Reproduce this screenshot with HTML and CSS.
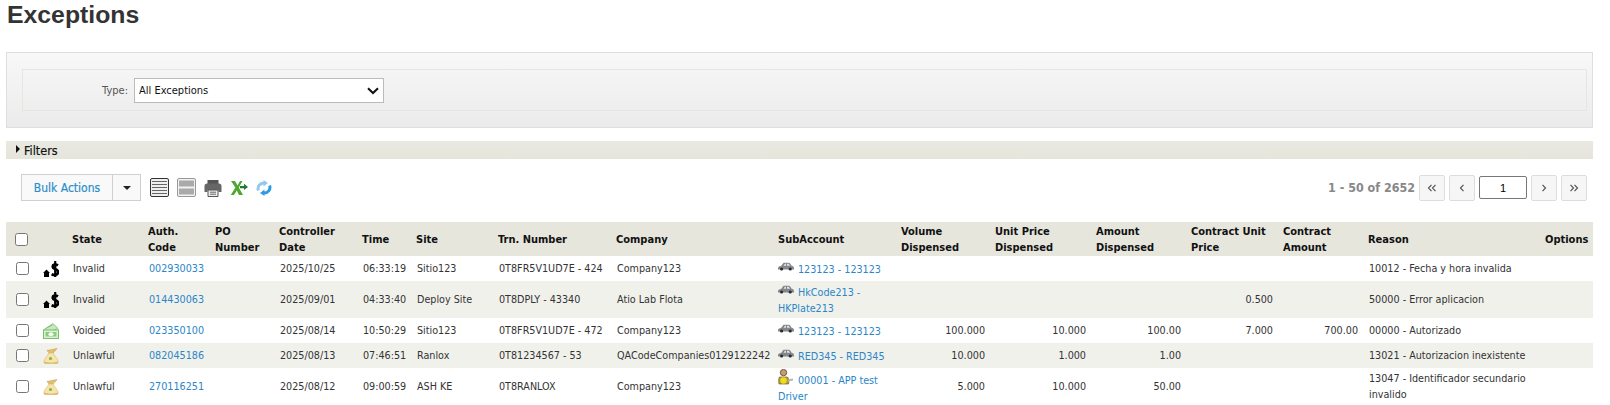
FILE: index.html
```html
<!DOCTYPE html>
<html>
<head>
  <title>Exceptions</title>
  <link rel="stylesheet" href="styles.css">
</head>
<body>
  <svg class="icon-defs" width="0" height="0">
    <symbol id="i-invalid" viewBox="0 0 16 16">
      <path d="M0 12L3.5 8.5L7 12H6V16H1V12Z" fill="#000"/>
      <path d="M15 4.4C12.6 3 9.6 3.4 9.8 5.8C10 8.4 15 7.8 15 11C15 14 11.6 14.6 8.6 13.2" fill="none" stroke="#000" stroke-width="2.8"/>
      <path d="M12.2 0V16" stroke="#000" stroke-width="2.2"/>
    </symbol>
    <symbol id="i-voided" viewBox="0 0 16 16">
      <path d="M0.5 7L10 0.5L15 5.5L6 9Z" fill="#c6e8bb" stroke="#79bd6e" stroke-width="0.8"/>
      <path d="M2.5 5.5L9.5 2" stroke="#79bd6e" stroke-width="0.8"/>
      <rect x="0.5" y="7" width="15" height="8.5" fill="#d9f1d0" stroke="#79bd6e"/>
      <rect x="2.5" y="9" width="11" height="4.5" fill="#8ccb80"/>
      <ellipse cx="8" cy="11.2" rx="2.6" ry="1.9" fill="#f1fbee"/>
    </symbol>
    <symbol id="i-bag" viewBox="0 0 16 16">
      <path d="M4 2.5L14 0.5L11.5 3.5L9.5 5.5H6.5Z" fill="#e3bf6c" stroke="#bd9644" stroke-width="0.5"/>
      <path d="M6 5C5 7.5 2 9.5 1 13C0.5 15 1.5 15.5 3.5 15.5H12.5C14.5 15.5 15.5 15 15 13C14 9.5 11 7.5 10 5Z" fill="#f5e5ac" stroke="#d8b66c" stroke-width="0.6"/>
      <circle cx="7.5" cy="10.5" r="1.6" fill="#8fb04a"/>
      <path d="M1.2 13.6C5 15 11 15 14.8 13.6V15.5H1.2Z" fill="#dcb866"/>
    </symbol>
    <symbol id="i-car" viewBox="0 0 16 9">
      <path d="M0 6.2C0 4.8 1 4.4 3 4L5 1.4C5.4 0.8 6 0.8 6.6 0.8H10.6C11.4 0.8 11.8 1 12.2 1.6L13.6 3.8C15 4.1 16 4.6 16 6.2V7.4H0Z" fill="#83878c"/>
      <path d="M5.6 3.8L6.8 1.8H8V3.8ZM9 1.8H10.8L12 3.8H9Z" fill="#dfe3e6"/>
      <circle cx="3.6" cy="7" r="1.6" fill="#2a2a2a"/>
      <circle cx="12.2" cy="7" r="1.6" fill="#2a2a2a"/>
    </symbol>
    <symbol id="i-driver" viewBox="0 0 16 16">
      <circle cx="5.5" cy="3.6" r="3.2" fill="#c69a72" stroke="#5f4128" stroke-width="0.8"/>
      <path d="M1.5 8H9.5C11 9.5 11 12 10.5 15H1C0.5 12 0.5 9.5 1.5 8Z" fill="#b9993a" stroke="#5f4f1c" stroke-width="0.6"/>
      <circle cx="5.5" cy="11.5" r="3.2" fill="#e6e020"/>
      <path d="M10 10.5L15 9.5V11.5L10 12.5Z" fill="#b5b5b5"/>
    </symbol>
    <symbol id="i-first" viewBox="0 0 10 8"><path d="M4.5 0.8L1.5 4L4.5 7.2M8.5 0.8L5.5 4L8.5 7.2" fill="none" stroke="#555" stroke-width="1.2"/></symbol>
    <symbol id="i-prev" viewBox="0 0 10 8"><path d="M6.5 0.8L3.5 4L6.5 7.2" fill="none" stroke="#555" stroke-width="1.2"/></symbol>
    <symbol id="i-next" viewBox="0 0 10 8"><path d="M3.5 0.8L6.5 4L3.5 7.2" fill="none" stroke="#555" stroke-width="1.2"/></symbol>
    <symbol id="i-last" viewBox="0 0 10 8"><path d="M1.5 0.8L4.5 4L1.5 7.2M5.5 0.8L8.5 4L5.5 7.2" fill="none" stroke="#555" stroke-width="1.2"/></symbol>
  </svg>

  <h1 class="page-title">Exceptions</h1>

  <div class="search-panel">
    <div class="search-inner">
      <label class="type-label" for="type">Type:</label>
      <div class="select-wrap">
        <select class="type-select" id="type">
          <option>All Exceptions</option>
        </select>
        <svg class="select-arrow" width="12" height="8" viewBox="0 0 12 8"><path d="M1 1.2L6 6L11 1.2" fill="none" stroke="#111" stroke-width="2"/></svg>
      </div>
    </div>
  </div>

  <div class="filters-bar">
    <span class="filters-arrow"></span>
    <span>Filters</span>
  </div>

  <div class="toolbar">
    <div class="bulk-group">
      <button class="bulk-btn">Bulk Actions</button>
      <button class="bulk-caret"><span class="caret"></span></button>
    </div>
    <div class="tool-icons">
      <svg width="19" height="19" viewBox="0 0 19 19">
        <rect x="0.5" y="0.5" width="18" height="18" rx="1.5" fill="#efefef" stroke="#333"/>
        <path d="M2 3.5H17M2 6.5H17M2 9.5H17M2 12.5H17M2 15.5H17" stroke="#666" stroke-width="1.2"/>
      </svg>
      <svg width="19" height="19" viewBox="0 0 19 19">
        <rect x="0.5" y="0.5" width="18" height="18" rx="1.5" fill="#f2f2f2" stroke="#999"/>
        <rect x="2" y="2.5" width="15" height="6" fill="#aaa"/>
        <rect x="2" y="10.5" width="15" height="6" fill="#aaa"/>
      </svg>
      <svg width="18" height="18" viewBox="0 0 18 18">
        <path d="M3.5 1H14.5V5H3.5Z" fill="#555"/>
        <path d="M0.5 7C0.5 5.5 1.5 4.5 3 4.5H15C16.5 4.5 17.5 5.5 17.5 7V13H14.5V11H3.5V13H0.5Z" fill="#666"/>
        <path d="M4 11H14V17.5H4Z" fill="#eee" stroke="#555"/>
        <path d="M6 13.2H12M6 15.2H12" stroke="#666"/>
      </svg>
      <svg width="18" height="16" viewBox="0 0 18 16">
        <path d="M1 1H5L7.6 5.4L10 1H12.5L8.8 7.5L13 15H9L6.8 10.6L4 15H0.8L5.4 7.6Z" fill="#4ea72e"/>
        <path d="M10 6H14V3.8L18 7L14 10V8.2H10Z" fill="#1f7a30"/>
      </svg>
      <svg width="16" height="16" viewBox="0 0 16 16">
        <path d="M2.4 10.5C1 6.5 4 2.6 8.5 3" fill="none" stroke="#93c8ee" stroke-width="3"/>
        <path d="M7.5 0L12 3L7.5 6.4Z" fill="#93c8ee"/>
        <path d="M13.6 5.5C15 9.5 12 13.4 7.5 13" fill="none" stroke="#2e9be6" stroke-width="3"/>
        <path d="M8.5 16L4 13L8.5 9.6Z" fill="#2e9be6"/>
      </svg>
    </div>
    <div class="pager">
      <span class="pager-count">1 - 50 of 2652</span>
      <button class="pager-btn"><svg class="pager-icon"><use href="#i-first"/></svg></button>
      <button class="pager-btn"><svg class="pager-icon"><use href="#i-prev"/></svg></button>
      <input class="pager-input" type="text" value="1">
      <button class="pager-btn"><svg class="pager-icon"><use href="#i-next"/></svg></button>
      <button class="pager-btn"><svg class="pager-icon"><use href="#i-last"/></svg></button>
    </div>
  </div>

  <table class="grid">
    <colgroup>
      <col class="c-check"><col class="c-icon"><col class="c-state"><col class="c-auth"><col class="c-po">
      <col class="c-date"><col class="c-time"><col class="c-site"><col class="c-trn"><col class="c-company">
      <col class="c-sub"><col class="c-volume"><col class="c-unit"><col class="c-amount"><col class="c-cunit">
      <col class="c-camount"><col class="c-reason"><col class="c-options">
    </colgroup>
    <thead>
      <tr>
        <th class="check-cell"><input type="checkbox"></th>
        <th></th>
        <th>State</th>
        <th>Auth. Code</th>
        <th>PO Number</th>
        <th>Controller Date</th>
        <th>Time</th>
        <th>Site</th>
        <th>Trn. Number</th>
        <th>Company</th>
        <th>SubAccount</th>
        <th>Volume Dispensed</th>
        <th>Unit Price Dispensed</th>
        <th>Amount Dispensed</th>
        <th>Contract Unit Price</th>
        <th>Contract Amount</th>
        <th>Reason</th>
        <th>Options</th>
      </tr>
    </thead>
    <tbody>
      <tr>
        <td class="check-cell"><input type="checkbox"></td>
        <td class="icon-cell"><svg class="state-icon"><use href="#i-invalid"/></svg></td>
        <td>Invalid</td>
        <td><a href="#">002930033</a></td>
        <td></td>
        <td>2025/10/25</td>
        <td>06:33:19</td>
        <td>Sitio123</td>
        <td>0T8FR5V1UD7E - 424</td>
        <td>Company123</td>
        <td class="sub-cell"><svg class="sub-icon"><use href="#i-car"/></svg><a href="#">123123 - 123123</a></td>
        <td class="num"></td>
        <td class="num"></td>
        <td class="num"></td>
        <td class="num"></td>
        <td class="num"></td>
        <td>10012 - Fecha y hora invalida</td>
        <td></td>
      </tr>
      <tr class="tall">
        <td class="check-cell"><input type="checkbox"></td>
        <td class="icon-cell"><svg class="state-icon"><use href="#i-invalid"/></svg></td>
        <td>Invalid</td>
        <td><a href="#">014430063</a></td>
        <td></td>
        <td>2025/09/01</td>
        <td>04:33:40</td>
        <td>Deploy Site</td>
        <td>0T8DPLY - 43340</td>
        <td>Atio Lab Flota</td>
        <td class="sub-cell"><svg class="sub-icon"><use href="#i-car"/></svg><a href="#">HkCode213 - HKPlate213</a></td>
        <td class="num"></td>
        <td class="num"></td>
        <td class="num"></td>
        <td class="num">0.500</td>
        <td class="num"></td>
        <td>50000 - Error aplicacion</td>
        <td></td>
      </tr>
      <tr>
        <td class="check-cell"><input type="checkbox"></td>
        <td class="icon-cell"><svg class="state-icon"><use href="#i-voided"/></svg></td>
        <td>Voided</td>
        <td><a href="#">023350100</a></td>
        <td></td>
        <td>2025/08/14</td>
        <td>10:50:29</td>
        <td>Sitio123</td>
        <td>0T8FR5V1UD7E - 472</td>
        <td>Company123</td>
        <td class="sub-cell"><svg class="sub-icon"><use href="#i-car"/></svg><a href="#">123123 - 123123</a></td>
        <td class="num">100.000</td>
        <td class="num">10.000</td>
        <td class="num">100.00</td>
        <td class="num">7.000</td>
        <td class="num">700.00</td>
        <td>00000 - Autorizado</td>
        <td></td>
      </tr>
      <tr>
        <td class="check-cell"><input type="checkbox"></td>
        <td class="icon-cell"><svg class="state-icon"><use href="#i-bag"/></svg></td>
        <td>Unlawful</td>
        <td><a href="#">082045186</a></td>
        <td></td>
        <td>2025/08/13</td>
        <td>07:46:51</td>
        <td>Ranlox</td>
        <td>0T81234567 - 53</td>
        <td>QACodeCompanies0129122242</td>
        <td class="sub-cell"><svg class="sub-icon"><use href="#i-car"/></svg><a href="#">RED345 - RED345</a></td>
        <td class="num">10.000</td>
        <td class="num">1.000</td>
        <td class="num">1.00</td>
        <td class="num"></td>
        <td class="num"></td>
        <td>13021 - Autorizacion inexistente</td>
        <td></td>
      </tr>
      <tr class="tall">
        <td class="check-cell"><input type="checkbox"></td>
        <td class="icon-cell"><svg class="state-icon"><use href="#i-bag"/></svg></td>
        <td>Unlawful</td>
        <td><a href="#">270116251</a></td>
        <td></td>
        <td>2025/08/12</td>
        <td>09:00:59</td>
        <td>ASH KE</td>
        <td>0T8RANLOX</td>
        <td>Company123</td>
        <td class="sub-cell driver-cell"><svg class="sub-icon driver"><use href="#i-driver"/></svg><a href="#">00001 - APP test Driver</a></td>
        <td class="num">5.000</td>
        <td class="num">10.000</td>
        <td class="num">50.00</td>
        <td class="num"></td>
        <td class="num"></td>
        <td>13047 - Identificador secundario invalido</td>
        <td></td>
      </tr>
    </tbody>
  </table>
</body>
</html>
```

FILE: styles.css
```css
html, body {
  margin: 0;
  background-color: #fff;
}

body {
  padding: 0 17px 0 6px;
  font-family: "DejaVu Sans Condensed", "DejaVu Sans", sans-serif;
  font-stretch: condensed;
  font-size: 10.7px;
  color: #333;
  overflow: hidden;
}

a {
  color: #2a86c8;
  text-decoration: none;
}

.icon-defs {
  position: absolute;
}

.page-title {
  margin: 0;
  height: 52px;
  padding-left: 1px;
  font-family: "Liberation Sans", sans-serif;
  font-size: 24.8px;
  line-height: 30px;
  font-weight: bold;
  color: #333;
}

.search-panel {
  height: 76px;
  padding: 16px 5px 0 15px;
  box-sizing: border-box;
  border: 1px solid #dedede;
  background: linear-gradient(#f8f8f8, #ebebeb);
}

.search-inner {
  display: flex;
  align-items: center;
  height: 42px;
  box-sizing: border-box;
  border: 1px solid #e6e6de;
}

.type-label {
  width: 105px;
  margin-right: 6px;
  text-align: right;
  font-size: 11px;
  color: #555;
}

.select-wrap {
  position: relative;
  width: 250px;
  height: 25px;
}

.type-select {
  width: 100%;
  height: 100%;
  padding: 1px 0 0 4px;
  border: 1px solid #bbb;
  border-radius: 0;
  background: #fff;
  appearance: none;
  font-family: inherit;
  font-stretch: condensed;
  font-size: 11px;
  color: #111;
}

.select-arrow {
  position: absolute;
  right: 5px;
  top: 9px;
}

.filters-bar {
  display: flex;
  align-items: center;
  height: 18px;
  margin-top: 13px;
  padding: 1px 0 0 10px;
  box-sizing: border-box;
  background: linear-gradient(#e9e9e1, #e5e5dc);
  font-size: 12.5px;
  color: #111;
  -webkit-text-stroke: 0.2px #111;
}

.filters-arrow {
  width: 0;
  height: 0;
  margin: -4px 4px 0 0;
  border-left: 4px solid #111;
  border-top: 4px solid transparent;
  border-bottom: 4px solid transparent;
}

.toolbar {
  display: flex;
  align-items: center;
  height: 27px;
  margin-top: 15px;
  padding: 0 6px 0 15px;
}

.bulk-group {
  display: flex;
  height: 27px;
}

.bulk-btn, .bulk-caret {
  border: 1px solid #d0d0d0;
  background: #f9f9f9;
  padding: 0;
  font-family: inherit;
  font-stretch: condensed;
}

.bulk-btn {
  width: 92px;
  padding-top: 1px;
  color: #2a8fc9;
  font-size: 12px;
  -webkit-text-stroke: 0.2px #2a8fc9;
}

.bulk-caret {
  width: 28px;
  border-left: 0;
}

.caret {
  display: inline-block;
  margin-bottom: 2px;
  border-top: 4px solid #222;
  border-left: 4px solid transparent;
  border-right: 4px solid transparent;
}

.tool-icons {
  display: flex;
  align-items: center;
  gap: 8px;
  margin-left: 9px;
}

.pager {
  display: flex;
  align-items: center;
  gap: 4px;
  margin-left: auto;
}

.pager-count {
  font-size: 12.4px;
  font-weight: bold;
  color: #888;
}

.pager-btn {
  display: flex;
  align-items: center;
  justify-content: center;
  width: 26px;
  height: 26px;
  padding: 0;
  border: 1px solid #ddd;
  border-radius: 2px;
  background: #f6f6f6;
}

.pager-icon {
  width: 10px;
  height: 8px;
}

.pager-input {
  width: 48px;
  height: 23px;
  padding: 0;
  box-sizing: border-box;
  border: 1px solid #777;
  border-radius: 2px;
  text-align: center;
  font-size: 11px;
  color: #000;
}

.grid {
  width: 1587px;
  margin-top: 21px;
  table-layout: fixed;
  border-collapse: collapse;
}

.c-check { width: 35px; }
.c-icon { width: 26px; }
.c-state { width: 76px; }
.c-auth { width: 67px; }
.c-po { width: 64px; }
.c-date { width: 83px; }
.c-time { width: 54px; }
.c-site { width: 82px; }
.c-trn { width: 118px; }
.c-company { width: 162px; }
.c-sub { width: 123px; }
.c-volume { width: 94px; }
.c-unit { width: 101px; }
.c-amount { width: 95px; }
.c-cunit { width: 92px; }
.c-camount { width: 85px; }
.c-reason { width: 177px; }
.c-options { width: 53px; }

.grid th {
  height: 34px;
  padding: 1px 5px 0;
  box-sizing: border-box;
  background-color: #e6e6dd;
  text-align: left;
  font-size: 11px;
  line-height: 16px;
  font-weight: bold;
  color: #111;
}

.grid td {
  height: 25px;
  padding: 0 5px 0 6px;
  box-sizing: border-box;
  line-height: 16px;
  vertical-align: middle;
}

.grid tr.tall td {
  height: 37px;
}

.grid tbody tr:nth-child(even) td {
  background-color: #f1f1ec;
}

.grid td.num {
  padding: 0 5px;
  text-align: right;
}

.grid .check-cell {
  padding: 0 0 0 9px;
  line-height: 0;
}

.grid td.check-cell {
  padding-left: 10px;
}

.check-cell input {
  margin: 0;
}

.grid td.icon-cell {
  padding: 0 0 0 2px;
  line-height: 0;
}

.state-icon {
  width: 16px;
  height: 16px;
}

.grid td.sub-cell {
  padding: 2px 5px 0;
}

.grid td.driver-cell {
  padding-top: 0;
}

.sub-icon {
  width: 16px;
  height: 9px;
  margin-right: 4px;
  vertical-align: 2px;
}

.sub-icon.driver {
  height: 16px;
  vertical-align: -1px;
}
```
